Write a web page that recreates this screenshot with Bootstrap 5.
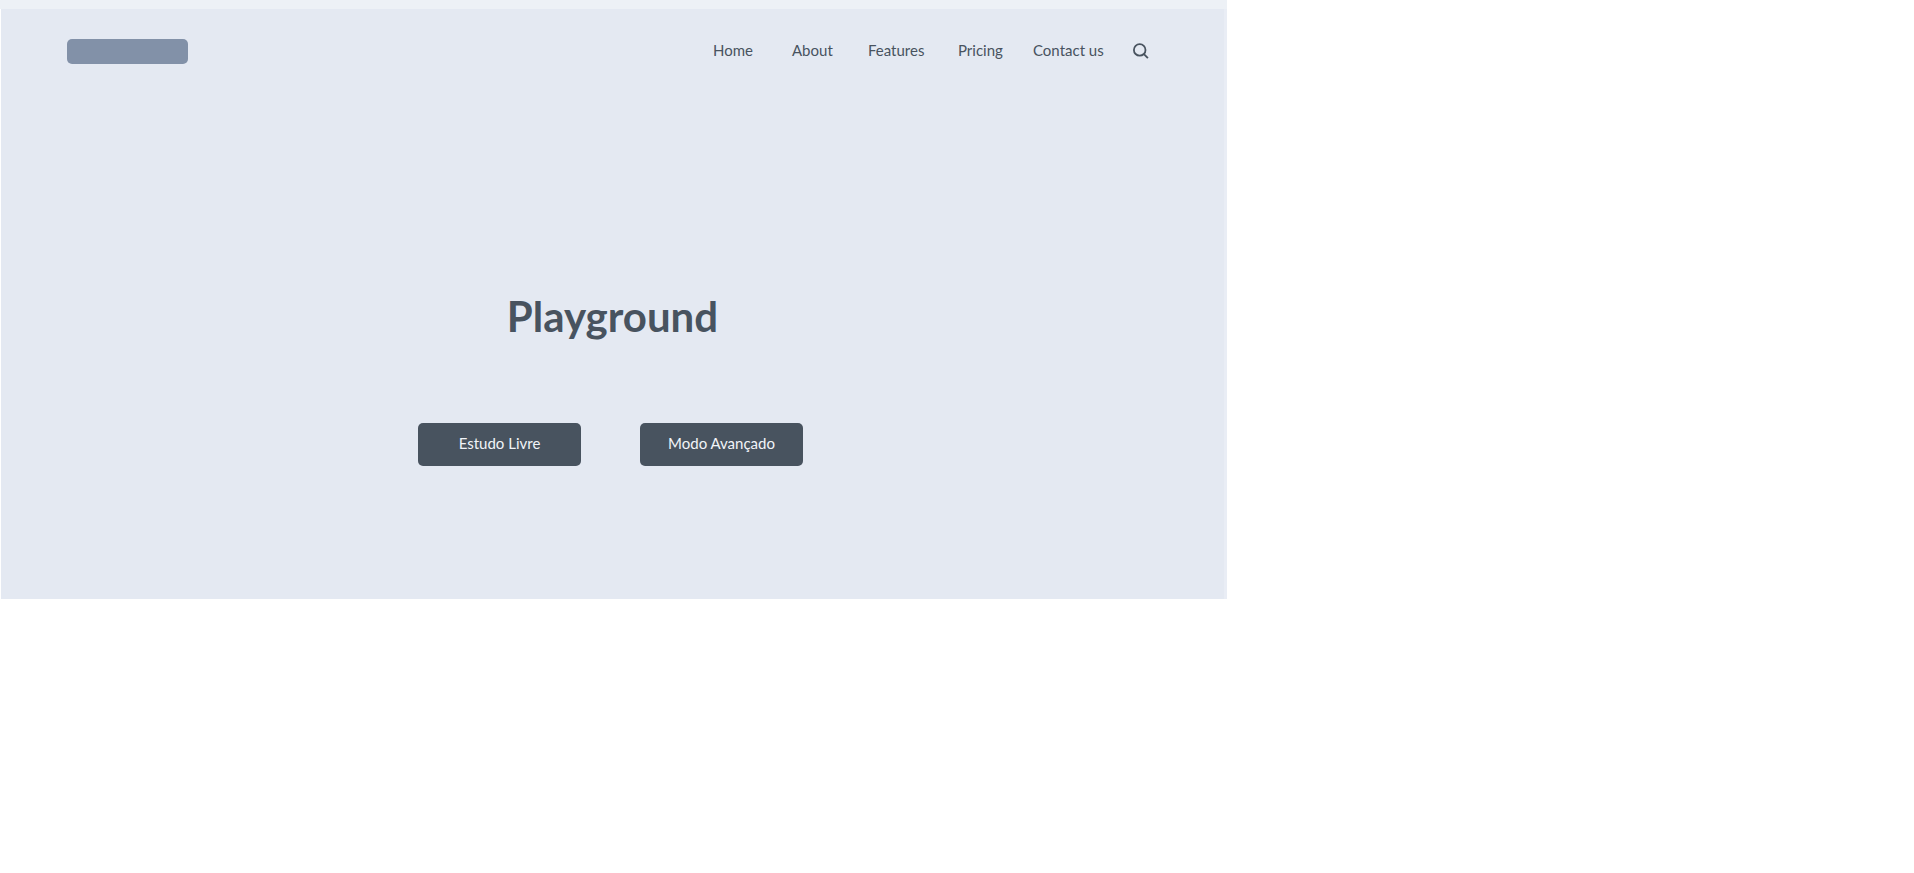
<!DOCTYPE html>
<html lang="pt">
<head>
<meta charset="utf-8">
<meta name="viewport" content="width=device-width, initial-scale=1">
<title>Playground</title>
<link href="https://cdn.jsdelivr.net/npm/bootstrap@5.3.0/dist/css/bootstrap.min.css" rel="stylesheet">
<style>
  body { font-family: Lato, sans-serif; font-size: 15px; line-height: 24px; color: #48535f; background: #fff; }
  .page-frame { max-width: 1227px; border-top: 9px solid #edf1f6; }
  .hero { background: #e4e9f2; margin-left: 1px; border-right: 3px solid #e9edf5; padding-bottom: 133px; }
  .site-nav { padding: 29px 75px 0 66px; }
  .logo-block { width: 121px; height: 25px; border-radius: 5px; background: #8291a8; }
  .menu { display: grid; grid-template-columns: 79px 76px 90px 75px 100px 16px; }
  .menu a { color: #48535f; white-space: nowrap; padding-bottom: 2px; }
  .search-btn { color: #48535f; line-height: 1; }
  .hero-title { font-size: 42px; line-height: 50px; font-weight: 700; margin: 227px 0 82px; }
  .hero-actions { gap: 59px; padding-right: 4px; }
  .hero-actions .btn { --bs-btn-font-size: 15px; --bs-btn-color: #f1f4f8; --bs-btn-bg: #48535f; --bs-btn-hover-color: #fff; --bs-btn-hover-bg: #3b454f;
    width: 163px; height: 43px; border: 0; border-radius: 5px; padding: 0 0 2px; white-space: nowrap; }
  @media (max-width: 767px) { .menu { display: flex; flex-wrap: wrap; gap: 16px; } .site-nav { padding: 24px; } .hero-actions { gap: 16px; } }
</style>
</head>
<body>
<div class="page-frame">
  <div class="hero">
    <header class="site-nav d-flex flex-wrap align-items-center justify-content-between">
      <a class="logo-block d-block" href="#" aria-label="Playground"></a>
      <nav class="menu align-items-center">
        <a class="text-decoration-none" href="#">Home</a>
        <a class="text-decoration-none" href="#">About</a>
        <a class="text-decoration-none" href="#">Features</a>
        <a class="text-decoration-none" href="#">Pricing</a>
        <a class="text-decoration-none" href="#">Contact us</a>
        <button class="search-btn d-flex bg-transparent border-0 p-0" type="button" aria-label="Search">
          <svg width="16" height="16" viewBox="0 0 16 16" fill="none" stroke="currentColor" stroke-width="1.8"><circle cx="6.7" cy="6.9" r="5.8"/><path d="M10.9 11.1 14.9 15.1"/></svg>
        </button>
      </nav>
    </header>
    <main class="text-center">
      <h1 class="hero-title">Playground</h1>
      <div class="hero-actions d-flex flex-wrap justify-content-center">
        <button class="btn" type="button">Estudo Livre</button>
        <button class="btn" type="button">Modo Avançado</button>
      </div>
    </main>
  </div>
</div>
<script src="https://cdn.jsdelivr.net/npm/bootstrap@5.3.0/dist/js/bootstrap.bundle.min.js"></script>
</body>
</html>
